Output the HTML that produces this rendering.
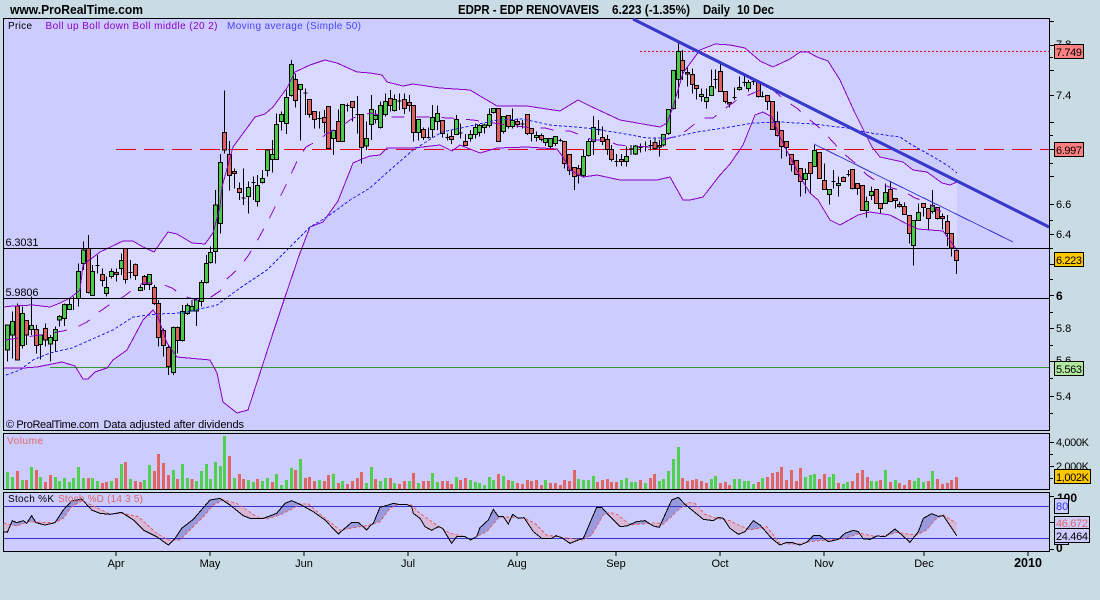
<!DOCTYPE html>
<html><head><meta charset="utf-8"><title>EDPR</title>
<style>html,body{margin:0;padding:0;background:#c9dbe3;width:1100px;height:600px;overflow:hidden}svg{display:block}text{font-family:"Liberation Sans",sans-serif;font-size:11px;fill:#000}</style></head>
<body>
<svg xmlns="http://www.w3.org/2000/svg" width="1100" height="600" viewBox="0 0 1100 600" shape-rendering="crispEdges">
<rect width="1100" height="600" fill="#c9dbe3"/>
<!-- panels -->
<rect x="3.5" y="18.5" width="1046" height="412" fill="#ccccff" stroke="#000"/>
<rect x="3.5" y="433.5" width="1046" height="56" fill="#ccccff" stroke="#000"/>
<rect x="3.5" y="492.5" width="1046" height="59" fill="#ccccff" stroke="#000"/>
<!-- band fill -->
<path fill="#d9d9ff" d="M4,307 13,306 33,305 50,307 60,303 70,298 80,290 83,265 100,252 123,241 133,241 143,247 154,252 168,232 177,234 192,243 205,244 213,233 220,207 222,187 233,147 247,128 255,117 265,114 273,107 287,88 295,72 310,65 325,60 337,63 357,72 370,73 382,75 387,82 403,86 413,84 440,88 470,90 497,106 527,106 560,111 578,100 590,106 620,120 660,127 667,123 673,107 683,73 700,50 715,44 730,45 745,48 760,61 773,67 790,59 800,52 808,52 817,57 828,61 840,80 855,113 872,147 880,157 903,162 913,170 927,172 942,183 950,185 957,182 957,250 943,231 918,229 907,224 890,215 870,212 858,215 840,225 830,220 818,200 810,193 802,180 790,157 780,137 772,117 763,112 755,115 743,145 730,164 720,175 703,197 690,200 683,200 670,177 657,180 620,180 597,175 583,177 570,170 563,157 557,149 527,147 497,148 480,153 460,145 452,151 440,145 413,148 387,148 380,155 370,156 362,159 353,163 338,201 323,222 310,227 300,253 285,297 273,333 260,373 248,410 237,413 223,402 217,373 210,360 177,357 167,343 158,317 153,310 143,320 127,350 113,360 107,368 95,372 88,379 83,379 75,366 62,362 37,367 23,368 4,368Z"/>
<!-- h lines behind -->
<path d="M116 149.5H1049" stroke="#dd0022" stroke-dasharray="20 8" fill="none"/>
<path d="M640 51.5H1049" stroke="#dd0022" stroke-dasharray="2 2" fill="none"/>
<path d="M50 367.5H1049" stroke="#339933" fill="none"/>
<!-- candles -->
<g transform="translate(0,200) scale(.33333)" stroke="#000" stroke-width="3">
<path fill="none" d="M22 375V485M37 335V475M52 310V480M67 320V445M79 360V435M94 290V405M109 375V460M122 405V478M137 370V440M151 405V485M166 380V455M178 345V380M193 310V378M208 295V330M221 290V330M215 296h12M235 190V320M250 125V210M265 105V280M277 195V287M292 165V220M286 197h12M307 205V260M319 230V290M334 205V235M349 205V245M364 160V225M376 145V250M391 180V235M385 218h12M406 190V240M421 255V272M433 225V270M448 224V270M463 255V315M475 300V440M490 385V470M505 435V525M520 380V525M532 380V460M547 315V425M562 310V345M576 300V335M590 295V378M604 240V320M619 165V250M631 140V190M646 -30V190"/>
<path fill="#4bc94b" d="M16 375h12V450h-12zM31 365h12V405h-12zM61 340h12V437h-12zM88 376h12V388h-12zM116 405h12V433h-12zM145 412h12V432h-12zM160 388h12V421h-12zM172 350h12V360h-12zM187 314h12V355h-12zM202 314h12V328h-12zM229 215h12V296h-12zM244 150h12V190h-12zM271 215h12V286h-12zM313 262h12V280h-12zM328 214h12V229h-12zM358 182h12V205h-12zM415 263h12V272h-12zM442 224h12V253h-12zM514 382h12V518h-12zM541 335h12V421h-12zM556 316h12V340h-12zM570 320h12V333h-12zM584 300h12V333h-12zM598 248h12V304h-12zM613 190h12V247h-12zM625 157h12V187h-12zM640 15h12V155h-12z"/>
<path fill="#e06060" d="M46 318h12V480h-12zM73 362h12V405h-12zM103 388h12V436h-12zM131 385h12V420h-12zM259 145h12V278h-12zM301 224h12V241h-12zM343 218h12V223h-12zM370 145h12V238h-12zM400 193h12V226h-12zM427 229h12V253h-12zM457 263h12V310h-12zM469 310h12V412h-12zM484 391h12V436h-12zM499 442h12V500h-12zM526 382h12V421h-12z"/>
</g>
<g transform="scale(.33333)" stroke="#000" stroke-width="3">
<path fill="none" d="M661 462V700M673 272V460M688 423V572M703 505V565M718 548V600M730 505V615M724 594h12M745 545V640M760 530V600M754 547h12M772 525V620M787 510V550M802 450V530M817 420V518M829 340V478M844 335V392M859 270V402M874 180V290M886 220V323M901 253V422M916 265V345M910 279h12M928 298V352M943 334V385M958 335V385M952 355h12M973 330V400M985 320V447M1000 391V465M1015 328V424M1027 314V425M1042 310V335M1036 317h12M1057 304V365M1072 288V400M1066 343h12M1084 343V490M1099 365V450"/>
<path fill="#4bc94b" d="M655 488h12V670h-12zM739 562h12V590h-12zM766 556h12V605h-12zM781 535h12V547h-12zM796 450h12V512h-12zM811 463h12V478h-12zM823 373h12V478h-12zM838 344h12V364h-12zM853 292h12V370h-12zM868 193h12V287h-12zM895 253h12V268h-12zM994 391h12V415h-12zM1021 314h12V424h-12zM1093 415h12V438h-12z"/>
<path fill="#e06060" d="M667 397h12V450h-12zM682 463h12V527h-12zM697 514h12V521h-12zM712 565h12V578h-12zM880 238h12V301h-12zM922 298h12V344h-12zM937 334h12V358h-12zM967 352h12V367h-12zM979 320h12V445h-12zM1009 364h12V424h-12zM1051 304h12V322h-12zM1078 343h12V442h-12z"/>
</g>
<g transform="translate(370,40) scale(.33333)" stroke="#000" stroke-width="3">
<path fill="none" d="M5 165V300M16 210V250M31 185V265M46 160V230M61 150V215M73 163V215M88 160V210M82 183h12M103 160V222M118 165V215M130 196V305M145 238V302M160 262V300M175 262V295M169 292h12M187 195V292M202 196V270M217 241V292M232 280V302M226 293h12M244 270V312M259 225V285M271 250V296M265 279h12M286 282V318M301 270V305M316 250V295M328 252V290M343 250V280M358 205V262M370 205V220M385 205V305M400 229V280M415 226V265M427 205V265M442 235V262M457 240V265M451 252h12M472 223V285M484 265V305M499 275V305M514 280V305M526 295V318M541 295V325M556 289V318M571 295V305M565 301h12M583 304V385M598 343V405M613 382V450M625 375V430M640 330V412M655 295V350M670 228V345M685 240V285M679 268h12M697 260V315M712 285V345M724 315V365M739 342V380M733 365h12"/>
<path fill="#4bc94b" d="M-1 208h12V253h-12zM10 226h12V238h-12zM25 196h12V262h-12zM40 184h12V223h-12zM67 179h12V211h-12zM139 238h12V277h-12zM181 232h12V268h-12zM196 220h12V245h-12zM253 238h12V283h-12zM295 283h12V295h-12zM310 262h12V283h-12zM322 256h12V277h-12zM337 255h12V262h-12zM352 223h12V256h-12zM364 205h12V217h-12zM394 229h12V274h-12zM421 241h12V259h-12zM493 286h12V292h-12zM520 295h12V307h-12zM535 295h12V319h-12zM550 289h12V310h-12zM634 349h12V406h-12zM649 304h12V346h-12zM664 262h12V304h-12z"/>
<path fill="#e06060" d="M55 176h12V196h-12zM97 178h12V205h-12zM112 187h12V196h-12zM124 196h12V277h-12zM154 268h12V292h-12zM211 241h12V280h-12zM238 290h12V298h-12zM280 304h12V316h-12zM379 205h12V304h-12zM409 226h12V259h-12zM436 244h12V253h-12zM466 223h12V280h-12zM478 265h12V280h-12zM508 286h12V298h-12zM577 304h12V370h-12zM592 343h12V391h-12zM607 382h12V409h-12zM619 385h12V406h-12zM691 292h12V304h-12zM706 298h12V328h-12zM718 328h12V358h-12z"/>
</g>
<g transform="translate(370,0) scale(.33333)" stroke="#000" stroke-width="3">
<path fill="none" d="M754 462V498M769 440V500M783 435V465M777 447h12M797 435V465M812 430V458M806 443h12M826 425V455M820 440h12M841 420V452M835 436h12M855 412V450M868 420V470M880 403V440M895 328V405M910 211V328M925 122V295M938 150V240M952 200V260M967 205V280M979 256V298M994 265V305M1009 265V325M1024 208V288M1036 208V265M1030 239h12M1051 193V275M1066 274V310M1078 307V322"/>
<path fill="#4bc94b" d="M763 469h12V484h-12zM791 438h12V462h-12zM874 403h12V435h-12zM889 328h12V400h-12zM904 211h12V325h-12zM919 154h12V238h-12zM988 283h12V289h-12zM1003 292h12V304h-12zM1018 259h12V286h-12z"/>
<path fill="#e06060" d="M748 478h12V484h-12zM849 428h12V445h-12zM862 436h12V441h-12zM932 181h12V211h-12zM946 217h12V222h-12zM961 223h12V253h-12zM973 256h12V265h-12zM1045 214h12V274h-12zM1060 274h12V304h-12zM1072 307h12V312h-12z"/>
</g>
<g transform="translate(730,0) scale(.33333)" stroke="#000" stroke-width="3">
<path fill="none" d="M13 262V300M7 293h12M28 230V272M43 228V260M37 248h12M55 240V275M70 240V255M64 245h12M85 245V292M98 275V292M92 289h12M112 286V330M127 304V390M142 335V410M154 391V475M169 424V470M184 463V515M199 481V520M211 505V590M226 505V580M241 487V580M253 435V500M268 457V537M283 490V570M298 568V613M310 510V565M304 545h12M325 530V590M340 530V545M355 510V530M349 523h12M367 508V568M382 550V585M397 556V632M410 590V652M424 560V600M439 568V612M451 610V640M466 550V612M481 545V605M496 595V625M508 605V622M523 608V645M538 646V730M550 661V797M565 610V662M580 610V650M595 625V690M607 570V640M622 622V658M637 640V688M652 645V738M664 700V770M679 751V822"/>
<path fill="#4bc94b" d="M22 262h12V268h-12zM49 248h12V265h-12zM220 520h12V538h-12zM247 451h12V499h-12zM292 568h12V583h-12zM319 550h12V556h-12zM404 604h12V631h-12zM418 574h12V586h-12zM460 577h12V610h-12zM544 661h12V736h-12zM559 637h12V661h-12zM601 616h12V634h-12z"/>
<path fill="#e06060" d="M79 245h12V289h-12zM106 286h12V304h-12zM121 304h12V388h-12zM136 364h12V406h-12zM148 391h12V439h-12zM163 424h12V442h-12zM178 463h12V493h-12zM193 481h12V523h-12zM205 505h12V544h-12zM235 487h12V520h-12zM262 457h12V535h-12zM277 541h12V568h-12zM334 532h12V544h-12zM361 508h12V565h-12zM376 550h12V565h-12zM391 556h12V631h-12zM433 568h12V610h-12zM445 610h12V625h-12zM475 568h12V604h-12zM490 595h12V601h-12zM502 613h12V619h-12zM517 619h12V643h-12zM532 646h12V700h-12zM574 610h12V622h-12zM589 625h12V655h-12zM616 622h12V655h-12zM631 649h12V655h-12zM646 664h12V700h-12zM658 700h12V744h-12zM673 751h12V781h-12z"/>
</g>
<!-- bollinger lines -->
<g fill="none" stroke="#8a00c8">
<path d="M4,307 13,306 33,305 50,307 60,303 70,298 80,290 83,265 100,252 123,241 133,241 143,247 154,252 168,232 177,234 192,243 205,244 213,233 220,207 222,187 233,147 247,128 255,117 265,114 273,107 287,88 295,72 310,65 325,60 337,63 357,72 370,73 382,75 387,82 403,86 413,84 440,88 470,90 497,106 527,106 560,111 578,100 590,106 620,120 660,127 667,123 673,107 683,73 700,50 715,44 730,45 745,48 760,61 773,67 790,59 800,52 808,52 817,57 828,61 840,80 855,113 872,147 880,157 903,162 913,170 927,172 942,183 950,185 957,182"/>
<path d="M4,368 23,368 37,367 62,362 75,366 83,379 88,379 95,372 107,368 113,360 127,350 143,320 153,310 158,317 167,343 177,357 210,360 217,373 223,402 237,413 248,410 260,373 273,333 285,297 300,253 310,227 323,222 338,201 353,163 362,159 370,156 380,155 387,148 413,148 440,145 452,151 460,145 480,153 497,148 527,147 557,149 563,157 570,170 583,177 597,175 620,180 657,180 670,177 683,200 690,200 703,197 720,175 730,164 743,145 755,115 763,112 772,117 780,137 790,157 802,180 810,193 818,200 830,220 840,225 858,215 870,212 890,215 907,224 918,229 943,231 957,250"/>
<path stroke-dasharray="13 12" d="M5,340 40,335 63,331 75,328 87,322 99,312 112,303 123,297 135,288 143,283 159,283 172,288 183,296 197,300 208,299 220,291 227,279 239,268 248,256 256,243 262,232 269,219 275,207 287,183 298,159 306,147 317,141 328,133 343,125 353,118 370,113 390,117 402,117 425,117 450,118 473,120 500,124 533,128 545,128 557,131 570,131 593,140 605,140 618,145 650,147 663,140 680,135 687,130 702,118 713,118 723,110 737,100 765,88 773,90 785,100 798,109 810,120 821,129 833,142 843,153 855,163 867,175 879,183 892,188 903,191 915,198 927,202 938,210 950,217"/>
</g>
<path fill="none" stroke="#2222ee" stroke-dasharray="3 2" d="M6,375 20,370 33,360 50,353 72,348 97,337 113,330 133,317 157,314 183,313 217,305 240,288 267,270 287,250 310,227 327,217 350,200 370,188 390,170 413,150 442,132 470,126 497,120 523,119 550,125 587,128 620,133 647,138 670,138 697,132 730,127 753,123 780,122 813,124 847,128 870,133 900,137 912,145 930,155 947,165 957,173"/>
<!-- h black -->
<path d="M4 248.5H1049M4 298.5H1049" stroke="#000" fill="none"/>
<!-- trendlines -->
<path d="M633 19L1049 227" stroke="#3a3acc" stroke-width="3" fill="none"/>
<path d="M814 144L1013 242" stroke="#3a3acc" fill="none"/>
<!-- price ticks -->
<path stroke="#000" fill="none" d="M1049 21.5h5M1049 45.5h5M1049 57.5h4M1049 70.5h5M1049 95.5h5M1049 122.5h5M1049 135.5h4M1049 149.5h5M1049 163.5h4M1049 176.5h5M1049 204.5h5M1049 220.5h4M1049 234.5h5M1049 248.5h4M1049 264.5h5M1049 279.5h4M1049 295.5h5M1049 312.5h4M1049 328.5h5M1049 345.5h4M1049 361.5h5M1049 378.5h4M1049 396.5h5M1049 413.5h4"/>
<text x="1056" y="48">7.8</text><text x="1056" y="99">7.4</text><text x="1056" y="208">6.6</text><text x="1056" y="238">6.4</text>
<text x="1056" y="300" style="font-size:12px;font-weight:bold">6</text>
<text x="1056" y="332">5.8</text><text x="1056" y="364">5.6</text><text x="1056" y="400">5.4</text>
<!-- price boxes -->
<rect x="1054.5" y="44.5" width="29" height="14" fill="#ff8080" stroke="#000"/><text x="1056" y="56" textLength="26">7.749</text>
<rect x="1054.5" y="142.5" width="29" height="14" fill="#ff8080" stroke="#000"/><text x="1056" y="154" textLength="26">6.997</text>
<rect x="1054.5" y="252.5" width="29" height="14" fill="#ffc800" stroke="#000"/><text x="1056" y="264" textLength="26">6.223</text>
<rect x="1054.5" y="361.5" width="29" height="14" fill="#b0e8a0" stroke="#000"/><text x="1056" y="373" textLength="26">5.563</text>
<!-- price text -->
<text x="8" y="29" textLength="24" style="font-size:10px">Price</text>
<text x="45.5" y="29" textLength="172" style="font-size:10px;fill:#8a00c8">Boll up Boll down Boll middle (20 2)</text>
<text x="227" y="29" textLength="134" style="font-size:10px;fill:#4444ff">Moving average (Simple 50)</text>
<text x="5.5" y="246" textLength="33" style="font-size:11px">6.3031</text>
<text x="5.5" y="296" textLength="33" style="font-size:11px">5.9806</text>
<text x="6" y="428" textLength="93" style="font-size:11px">© ProRealTime.com</text>
<text x="103.5" y="428" textLength="140.5" style="font-size:11px">Data adjusted after dividends</text>
<!-- header -->
<text x="10" y="14" textLength="133" lengthAdjust="spacingAndGlyphs" style="font-size:13px;font-weight:bold">www.ProRealTime.com</text>
<text x="458" y="14" textLength="141" lengthAdjust="spacingAndGlyphs" style="font-size:13px;font-weight:bold">EDPR - EDP RENOVAVEIS</text>
<text x="612" y="14" textLength="78" lengthAdjust="spacingAndGlyphs" style="font-size:13px;font-weight:bold">6.223 (-1.35%)</text>
<text x="703" y="14" textLength="27" lengthAdjust="spacingAndGlyphs" style="font-size:13px;font-weight:bold">Daily</text>
<text x="737" y="14" textLength="37" lengthAdjust="spacingAndGlyphs" style="font-size:13px;font-weight:bold">10 Dec</text>
<!-- volume -->
<g transform="translate(0,425) scale(.33333)" stroke-width="9" fill="none">
<path stroke="#4fd04f" d="M22 141V192M37 156V192M67 165V192M94 126V192M122 156V192M166 156V192M178 168V192M193 159V192M208 171V192M221 159V192M235 126V192M250 159V192M277 159V192M292 168V192M334 168V192M364 117V192M391 162V192M433 165V192M448 120V192M520 135V192M547 117V192M562 159V192M590 168V192M604 138V192M619 117V192M631 162V192M646 111V192M661 123V192M673 33V192M703 159V192M745 165V192M760 171V192M787 168V192M802 159V192M829 147V192M844 180V192M859 165V192M874 129V192M901 102V192M958 165V192M1000 147V192M1027 168V192M1099 174V192M1114 126V192M1141 168V192M1156 159V192M1183 174V192M1228 168V192M1255 174V192M1297 144V192M1312 171V192M1369 156V192M1411 165V192M1426 171V192M1438 174V192M1453 180V192M1468 156V192M1480 165V192M1510 153V192M1537 168V192M1636 165V192M1735 162V192M1750 165V192M1765 165V192M1780 153V192M1864 165V192M1879 159V192M1894 171V192M1906 171V192M1936 174V192M1978 168V192M1990 162V192M2005 138V192M2020 102V192M2035 66V192M2134 162V192M2146 153V192M2203 162V192M2218 162V192M2233 168V192M2245 168V192M2260 177V192M2288 159V192M2416 156V192M2431 150V192M2443 147V192M2488 156V192M2500 147V192M2530 177V192M2542 171V192M2614 168V192M2629 168V192M2656 135V192M2686 165V192M2743 168V192M2755 159V192M2770 171V192M2797 138V192"/>
<path stroke="#e06666" d="M52 138V192M79 165V192M109 135V192M137 171V192M151 150V192M265 159V192M307 174V192M319 171V192M349 159V192M376 111V192M406 168V192M421 171V192M463 138V192M475 87V192M490 114V192M505 150V192M532 162V192M576 162V192M688 93V192M718 147V192M730 162V192M772 162V192M817 171V192M886 135V192M916 159V192M928 156V192M943 168V192M973 168V192M985 150V192M1015 174V192M1042 177V192M1057 168V192M1072 159V192M1084 141V192M1126 162V192M1171 159V192M1198 177V192M1213 168V192M1240 144V192M1270 168V192M1285 168V192M1327 168V192M1342 168V192M1354 177V192M1381 165V192M1396 159V192M1495 147V192M1525 165V192M1552 174V192M1567 177V192M1582 165V192M1594 168V192M1609 165V192M1624 180V192M1651 174V192M1666 174V192M1681 180V192M1693 165V192M1708 168V192M1723 135V192M1792 171V192M1807 165V192M1822 162V192M1834 171V192M1849 171V192M1921 165V192M1951 159V192M1963 147V192M2047 159V192M2062 168V192M2077 165V192M2089 162V192M2104 168V192M2119 174V192M2161 174V192M2176 171V192M2188 180V192M2275 171V192M2302 156V192M2317 144V192M2332 141V192M2344 126V192M2359 165V192M2374 135V192M2389 168V192M2401 129V192M2458 162V192M2473 147V192M2515 174V192M2557 168V192M2572 144V192M2587 135V192M2602 156V192M2641 165V192M2671 171V192M2698 174V192M2713 180V192M2728 165V192M2785 168V192M2812 162V192M2827 177V192M2842 174V192M2854 165V192M2869 156V192"/>
</g>
<text x="7" y="444" textLength="36" style="font-size:10px;fill:#e06666">Volume</text>
<path stroke="#000" fill="none" d="M1049 442.5h5M1049 454.5h4M1049 466.5h5M1049 478.5h4"/>
<text x="1056" y="446" textLength="33">4,000K</text><text x="1056" y="470" textLength="33">2,000K</text>
<rect x="1054.5" y="469.5" width="36" height="14" fill="#ffc800" stroke="#000"/><text x="1056" y="481" textLength="33">1,002K</text>
<!-- stoch -->
<defs>
<clipPath id="aboveD"><path d="M11,0L11,295 50,303 85,290 130,292 165,293 190,280 215,245 245,228 275,240 330,268 365,265 415,275 470,325 505,345 540,345 570,315 610,275 640,240 670,225 710,235 770,275 800,282 840,270 880,250 900,237 925,237 970,275 1020,315 1040,312 1080,305 1110,300 1140,290 1170,250 1195,238 1235,240 1260,265 1310,300 1350,325 1395,335 1410,345 1430,335 1460,320 1495,280 1510,275 1575,280 1605,295 1640,330 1690,338 1750,345 1775,330 1810,270 1830,262 1855,270 1890,300 1970,293 1990,297 2035,255 2065,232 2085,235 2115,268 2150,280 2180,285 2190,287 2215,300 2250,315 2300,305 2340,355 2390,358 2430,350 2480,345 2530,342 2580,325 2620,333 2660,332 2690,322 2730,328 2750,330 2780,315 2810,280 2830,270 2870,295V0Z"/></clipPath>
<clipPath id="belowD"><path d="M11,380L11,295 50,303 85,290 130,292 165,293 190,280 215,245 245,228 275,240 330,268 365,265 415,275 470,325 505,345 540,345 570,315 610,275 640,240 670,225 710,235 770,275 800,282 840,270 880,250 900,237 925,237 970,275 1020,315 1040,312 1080,305 1110,300 1140,290 1170,250 1195,238 1235,240 1260,265 1310,300 1350,325 1395,335 1410,345 1430,335 1460,320 1495,280 1510,275 1575,280 1605,295 1640,330 1690,338 1750,345 1775,330 1810,270 1830,262 1855,270 1890,300 1970,293 1990,297 2035,255 2065,232 2085,235 2115,268 2150,280 2180,285 2190,287 2215,300 2250,315 2300,305 2340,355 2390,358 2430,350 2480,345 2530,342 2580,325 2620,333 2660,332 2690,322 2730,328 2750,330 2780,315 2810,280 2830,270 2870,295V380Z"/></clipPath>
</defs>
<g transform="translate(0,425) scale(.33333)" fill="none">
<path clip-path="url(#aboveD)" fill="#9999dd" d="M11,320 22,322 37,287 50,293 70,287 80,295 95,272 108,293 135,300 165,293 190,255 215,228 245,222 275,255 300,265 330,268 365,262 400,285 430,315 470,335 505,360 525,340 545,310 580,283 630,225 660,220 690,240 730,272 750,280 790,280 830,265 855,235 875,227 900,238 940,260 975,285 1015,327 1055,292 1075,292 1100,315 1110,303 1120,295 1140,247 1165,240 1180,235 1195,238 1220,238 1235,245 1240,265 1260,280 1275,305 1295,316 1315,305 1328,310 1355,355 1370,335 1395,335 1412,345 1430,335 1440,308 1465,285 1480,253 1495,275 1510,275 1525,297 1538,268 1555,280 1572,278 1600,320 1625,340 1655,340 1668,332 1685,338 1710,355 1735,345 1750,340 1790,247 1805,247 1830,275 1860,305 1880,303 1910,290 1935,287 1960,303 1978,307 2015,225 2035,217 2055,238 2110,283 2140,287 2155,277 2170,280 2190,310 2215,328 2235,320 2260,287 2280,300 2315,340 2340,360 2360,352 2375,352 2400,360 2420,352 2440,332 2460,332 2485,350 2515,343 2535,325 2560,316 2575,320 2590,342 2610,343 2630,333 2655,335 2685,312 2700,325 2730,352 2755,320 2770,280 2795,266 2815,274 2830,272 2870,332V380H11Z"/>
<path clip-path="url(#belowD)" fill="#d8b8d8" d="M11,320 22,322 37,287 50,293 70,287 80,295 95,272 108,293 135,300 165,293 190,255 215,228 245,222 275,255 300,265 330,268 365,262 400,285 430,315 470,335 505,360 525,340 545,310 580,283 630,225 660,220 690,240 730,272 750,280 790,280 830,265 855,235 875,227 900,238 940,260 975,285 1015,327 1055,292 1075,292 1100,315 1110,303 1120,295 1140,247 1165,240 1180,235 1195,238 1220,238 1235,245 1240,265 1260,280 1275,305 1295,316 1315,305 1328,310 1355,355 1370,335 1395,335 1412,345 1430,335 1440,308 1465,285 1480,253 1495,275 1510,275 1525,297 1538,268 1555,280 1572,278 1600,320 1625,340 1655,340 1668,332 1685,338 1710,355 1735,345 1750,340 1790,247 1805,247 1830,275 1860,305 1880,303 1910,290 1935,287 1960,303 1978,307 2015,225 2035,217 2055,238 2110,283 2140,287 2155,277 2170,280 2190,310 2215,328 2235,320 2260,287 2280,300 2315,340 2340,360 2360,352 2375,352 2400,360 2420,352 2440,332 2460,332 2485,350 2515,343 2535,325 2560,316 2575,320 2590,342 2610,343 2630,333 2655,335 2685,312 2700,325 2730,352 2755,320 2770,280 2795,266 2815,274 2830,272 2870,332V0H11Z"/>
<path stroke="#3333cc" stroke-width="3" d="M12 244H3147M12 340H3147"/>
<path stroke="#e06060" stroke-width="3" stroke-dasharray="9 6" d="M11,295 50,303 85,290 130,292 165,293 190,280 215,245 245,228 275,240 330,268 365,265 415,275 470,325 505,345 540,345 570,315 610,275 640,240 670,225 710,235 770,275 800,282 840,270 880,250 900,237 925,237 970,275 1020,315 1040,312 1080,305 1110,300 1140,290 1170,250 1195,238 1235,240 1260,265 1310,300 1350,325 1395,335 1410,345 1430,335 1460,320 1495,280 1510,275 1575,280 1605,295 1640,330 1690,338 1750,345 1775,330 1810,270 1830,262 1855,270 1890,300 1970,293 1990,297 2035,255 2065,232 2085,235 2115,268 2150,280 2180,285 2190,287 2215,300 2250,315 2300,305 2340,355 2390,358 2430,350 2480,345 2530,342 2580,325 2620,333 2660,332 2690,322 2730,328 2750,330 2780,315 2810,280 2830,270 2870,295"/>
<path stroke="#000" stroke-width="3" d="M11,320 22,322 37,287 50,293 70,287 80,295 95,272 108,293 135,300 165,293 190,255 215,228 245,222 275,255 300,265 330,268 365,262 400,285 430,315 470,335 505,360 525,340 545,310 580,283 630,225 660,220 690,240 730,272 750,280 790,280 830,265 855,235 875,227 900,238 940,260 975,285 1015,327 1055,292 1075,292 1100,315 1110,303 1120,295 1140,247 1165,240 1180,235 1195,238 1220,238 1235,245 1240,265 1260,280 1275,305 1295,316 1315,305 1328,310 1355,355 1370,335 1395,335 1412,345 1430,335 1440,308 1465,285 1480,253 1495,275 1510,275 1525,297 1538,268 1555,280 1572,278 1600,320 1625,340 1655,340 1668,332 1685,338 1710,355 1735,345 1750,340 1790,247 1805,247 1830,275 1860,305 1880,303 1910,290 1935,287 1960,303 1978,307 2015,225 2035,217 2055,238 2110,283 2140,287 2155,277 2170,280 2190,310 2215,328 2235,320 2260,287 2280,300 2315,340 2340,360 2360,352 2375,352 2400,360 2420,352 2440,332 2460,332 2485,350 2515,343 2535,325 2560,316 2575,320 2590,342 2610,343 2630,333 2655,335 2685,312 2700,325 2730,352 2755,320 2770,280 2795,266 2815,274 2830,272 2870,332"/>
</g>
<text x="8" y="502" textLength="46" style="font-size:10px">Stoch %K</text>
<text x="58" y="502" textLength="85" style="font-size:10px;fill:#e06666">Stoch %D (14 3 5)</text>
<path stroke="#000" fill="none" d="M1049 496.5h5M1049 522.5h5M1049 549.5h5"/>
<text x="1057" y="502" style="font-size:12px;font-weight:bold">100</text>
<text x="1056" y="552" style="font-size:12px;font-weight:bold">0</text>
<rect x="1054.5" y="498.5" width="14" height="15" fill="#ccccff" stroke="#000"/><text x="1056" y="510" style="font-size:11px;fill:#3333ee">80</text>
<rect x="1054.5" y="541.5" width="14" height="3" fill="#ccccff" stroke="#000"/>
<rect x="1054.5" y="516.5" width="35" height="12" fill="#ccccff" stroke="#000"/><text x="1056" y="527" textLength="32" style="font-size:11px;fill:#e06666">46.672</text>
<rect x="1054.5" y="528.5" width="35" height="14" fill="#ccccff" stroke="#000"/><text x="1056" y="540" textLength="32">24.464</text>
<!-- x axis -->
<path stroke="#000" fill="none" d="M116 551v5M210 551v5M304 551v5M408 551v5M517 551v5M616 551v5M720 551v5M824 551v5M924 551v5M1028 551v5"/>
<text x="116" y="567" text-anchor="middle">Apr</text>
<text x="210" y="567" text-anchor="middle">May</text>
<text x="304" y="567" text-anchor="middle">Jun</text>
<text x="408" y="567" text-anchor="middle">Jul</text>
<text x="517" y="567" text-anchor="middle">Aug</text>
<text x="616" y="567" text-anchor="middle">Sep</text>
<text x="720" y="567" text-anchor="middle">Oct</text>
<text x="824" y="567" text-anchor="middle">Nov</text>
<text x="924" y="567" text-anchor="middle">Dec</text>
<text x="1028" y="567" text-anchor="middle" style="font-size:12.5px;font-weight:bold">2010</text>
</svg>
</body></html>
